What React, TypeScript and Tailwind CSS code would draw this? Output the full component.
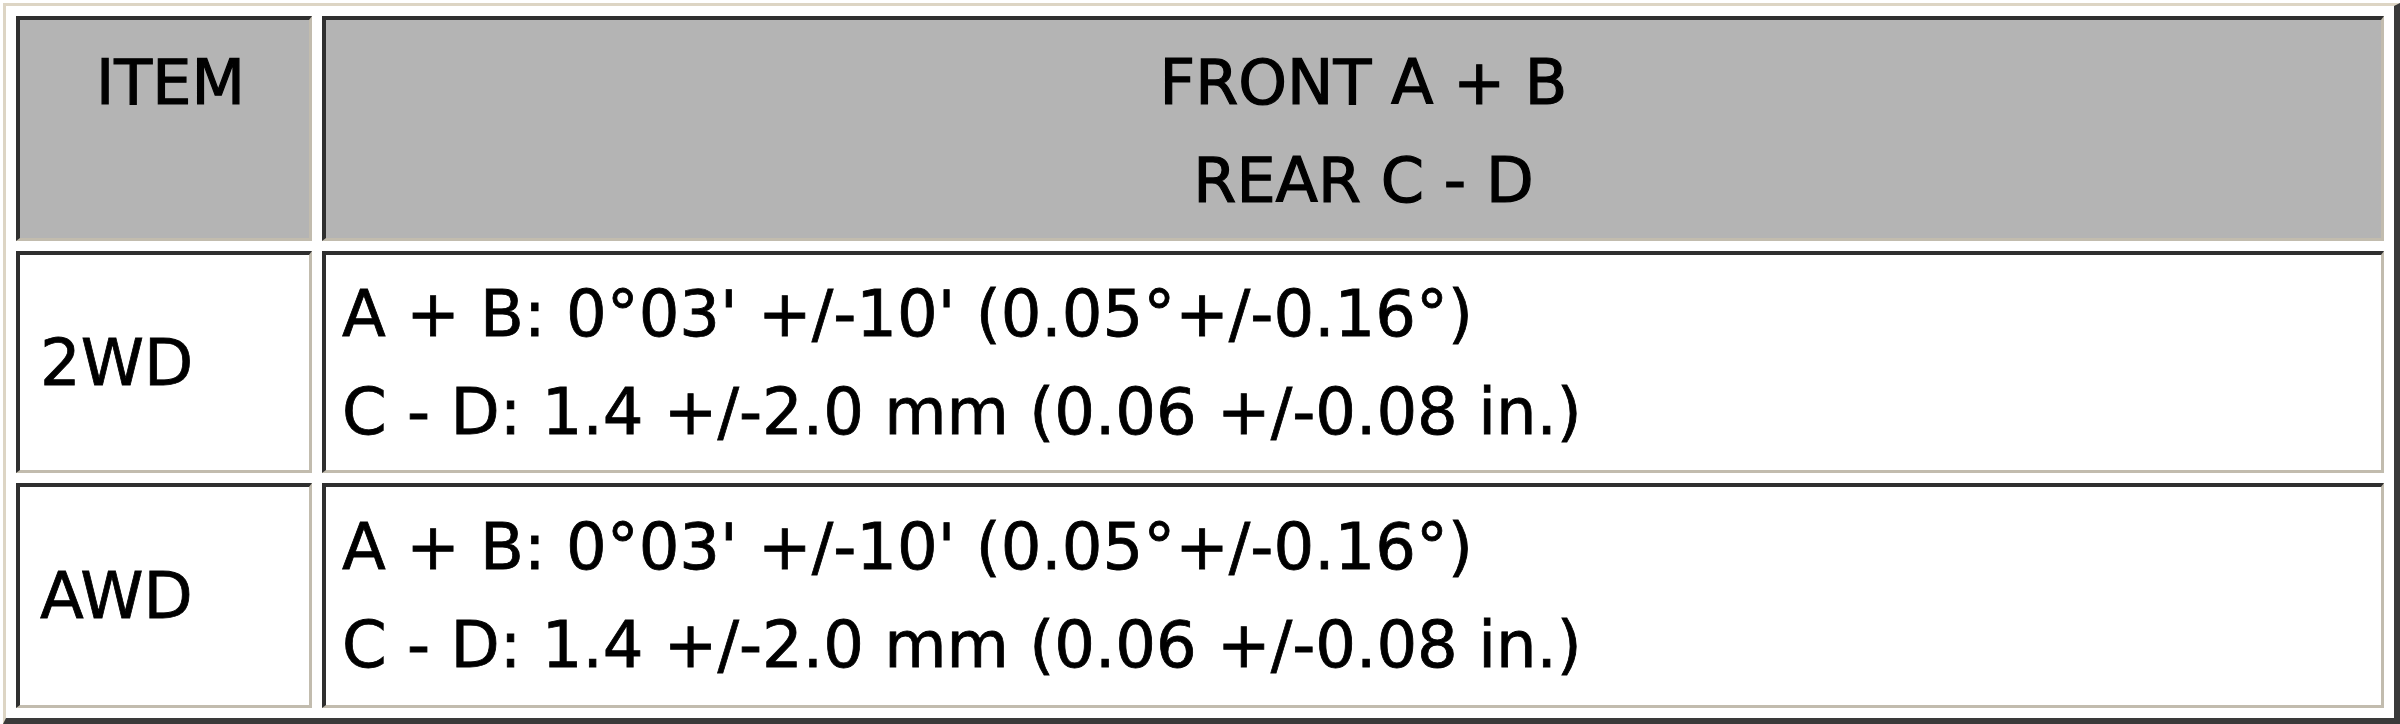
import React from "react";

const dark = "border-t-[4px] border-l-[4px] border-b-[3px] border-r-[3px] border-t-[#2f2f2f] border-l-[#2f2f2f] border-b-[#c2bcae] border-r-[#c2bcae]";

function Head({ children, className }: { children: React.ReactNode; className?: string }) {
  return (
    <div className={`${dark} bg-[#b4b4b4] text-center pt-[14px] text-[62px] [-webkit-text-stroke:1.2px_black] ${className ?? ""}`}>{children}</div>
  );
}

function Body({ children, className }: { children: React.ReactNode; className?: string }) {
  return (
    <div className={`${dark} bg-white flex flex-col justify-center text-[64px] [-webkit-text-stroke:0.8px_black] ${className ?? ""}`}>{children}</div>
  );
}

export default function App() {
  const spec = (
    <>
      <div>A + B: 0°03' +/-10' (0.05°+/-0.16°)</div>
      <div>C - D: 1.4 +/-2.0 mm (0.06 +/-0.08 in.)</div>
    </>
  );
  return (
    <div className="w-[2400px] h-[724px] bg-white overflow-hidden">
      <div
        className="ml-[3px] mt-[3px] w-[2397px] h-[721px] border-t-[3px] border-l-[3px] border-r-[6px] border-b-[6px] border-t-[#ddd5c4] border-l-[#ddd5c4] border-r-[#3a3a3a] border-b-[#3a3a3a] p-[10px] grid grid-cols-[296px_2062px] grid-rows-[225px_222px_225px] gap-[10px] text-black leading-[98px]"
        style={{ fontFamily: '"DejaVu Sans", Verdana, sans-serif' }}
      >
        <Head className="pl-[12px]">ITEM</Head>
        <Head className="pl-[20px]">
          <div>FRONT A + B</div>
          <div>REAR C - D</div>
        </Head>
        <Body className="pl-[20px]">2WD</Body>
        <Body className="pl-[16px]">{spec}</Body>
        <Body className="pl-[20px]">AWD</Body>
        <Body className="pl-[16px]">{spec}</Body>
      </div>
    </div>
  );
}
